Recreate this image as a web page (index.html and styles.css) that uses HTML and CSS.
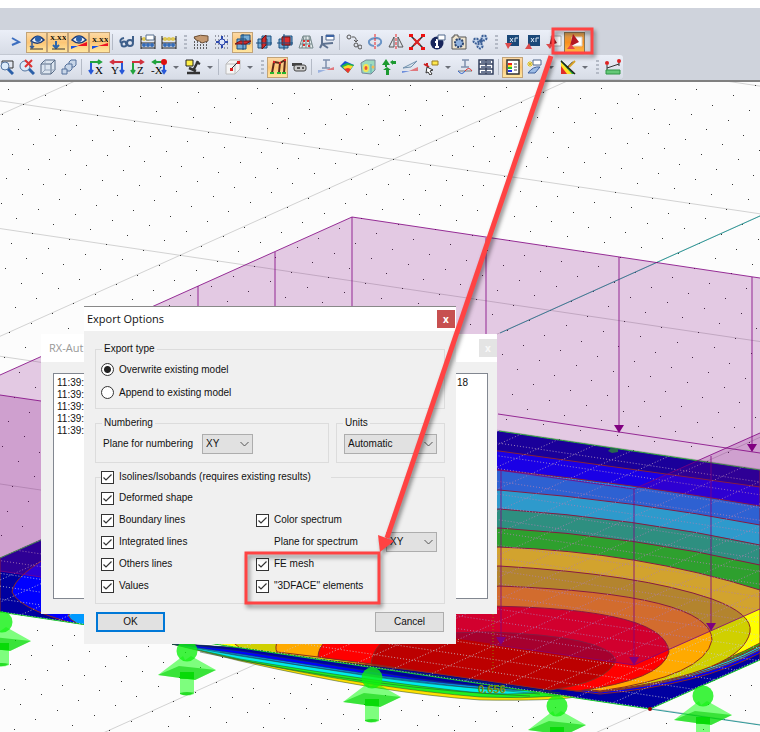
FILE: index.html
```html
<!DOCTYPE html>
<html lang="en">
<head>
<meta charset="utf-8">
<title>Export Options</title>
<link rel="stylesheet" href="styles.css">
</head>
<body>
<div class="band"></div>
<div class="bars">
	<div class="bar">
		<button class="tb" aria-label="Next"><svg viewBox="0 0 16 16"><path d="M4 4L11 8L4 11" fill="none" stroke="#3d6fc0" stroke-width="2"/></svg></button>
		<button class="tb on" aria-label="Show loads"><svg viewBox="0 0 16 16"><path d="M2 7Q8-2 15 6Q9 12 2 7Z" fill="#e8f0fa" stroke="#1d3c78" stroke-width="1.5"/><circle cx="9" cy="5" r="3" fill="#2b61ad"/><path d="M3 7v7M1 12l2 2l2-2" fill="none" stroke="#345b98" stroke-width="1.5"/><path d="M1 15H14" stroke="#333"/></svg></button>
		<button class="tb on" aria-label="Load values"><svg viewBox="0 0 16 16"><text x="0" y="6" class="xx">X.XX</text><path d="M6 7v7M3 11l3 3l3-3" fill="none" stroke="#2e66ad" stroke-width="2"/><path d="M2 15h13" stroke="#333"/></svg></button>
		<button class="tb on" aria-label="Show results"><svg viewBox="0 0 16 16"><path d="M1 6Q8-2 15 6Q8 12 1 6Z" fill="#e8f0fa" stroke="#1d3c78" stroke-width="1.5"/><circle cx="8" cy="5" r="3" fill="#2b61ad"/><path d="M0 15V12L7 12Z" fill="#174ee0"/><path d="M6 12L16 8V12Z" fill="#e12"/></svg></button>
		<button class="tb on" aria-label="Result values"><svg viewBox="0 0 16 16"><text x="0" y="8" class="xx">X.XX</text><path d="M0 15V12H7Z" fill="#174ee0"/><path d="M6 12L16 9V12Z" fill="#e12"/></svg></button>
		<i class="sep"></i>
		<button class="tb" aria-label="View"><svg viewBox="0 0 16 16" fill="none" stroke="#3e5f8a" stroke-width="2"><path d="M5 4Q0 5 2 9"/><circle cx="5" cy="10" r="2.5"/><circle cx="11" cy="9" r="3"/><path d="M14 8V2M8 9L6 9"/></svg></button>
		<button class="tb" aria-label="Calculate"><svg viewBox="0 0 16 16"><path d="M1 2V15M15 2V15M1 5H15M1 9H15M1 14H15" stroke="#222" fill="none"/><g fill="#e1c951"><circle cx="4" cy="5" r="2"/><circle cx="8" cy="5" r="2"/></g><g fill="#356cb8"><circle cx="4" cy="11" r="2"/><circle cx="8" cy="11" r="2"/><circle cx="12" cy="11" r="2"/></g><path d="M6 1H14V6H6Z" fill="#fff" stroke="#58708f"/></svg></button>
		<button class="tb" aria-label="Calculate all"><svg viewBox="0 0 16 16"><path d="M1 2V15M15 2V15M1 5H15M1 9H15M1 14H15" stroke="#222" fill="none"/><g fill="#e1c951"><circle cx="4" cy="5" r="2"/><circle cx="8" cy="5" r="2"/><circle cx="12" cy="5" r="2"/></g><g fill="#356cb8"><circle cx="4" cy="11" r="2"/><circle cx="8" cy="11" r="2"/><circle cx="12" cy="11" r="2"/></g></svg></button>
		<i class="grip"></i>
		<button class="tb" aria-label="Grid"><svg viewBox="0 0 16 16"><path d="M1 8H15M1 11H15M1 14H15M1 4H6" stroke="#333" stroke-width="1.5" stroke-dasharray="1 2"/><path d="M1 3Q7 0 15 2V7L9 9Q7 7 3 6Z" fill="#c49a73" stroke="#6d5138"/></svg></button>
		<button class="tb" aria-label="Snap"><svg viewBox="0 0 16 16"><path d="M1 2H15M1 6H15M1 10H15M1 14H15" stroke="#445" stroke-dasharray="1 2"/><circle cx="8" cy="8" r="3" fill="#dfe7fa" stroke="#2c48ae"/><path d="M8 2V5M8 11V14M2 8H5M11 8H14" stroke="#2c48ae" stroke-width="2"/></svg></button>
		<button class="tb on" aria-label="Work plane XY"><svg viewBox="0 0 16 16"><path d="M6 1H15V10H6ZM2 5H11V15H2Z" fill="#75acd6" stroke="#1b4f7e"/><path d="M0 10L5 7H16L11 10Z" fill="#d22b2b" stroke="#701414"/><path d="M8 0V16" stroke="#1b4f7e"/></svg></button>
		<button class="tb" aria-label="Work plane YZ"><svg viewBox="0 0 16 16"><path d="M6 2H15V11H6ZM2 5H11V14H2Z" fill="#75acd6" stroke="#1b4f7e"/><path d="M6 5L10 1V11L6 15Z" fill="#d22b2b" stroke="#701414"/><path d="M0 9H16" stroke="#1b4f7e"/></svg></button>
		<button class="tb" aria-label="Work plane XZ"><svg viewBox="0 0 16 16"><path d="M6 2H15V11H6ZM2 5H11V14H2Z" fill="#75acd6" stroke="#1b4f7e"/><path d="M5 3H13V11H5Z" fill="#e12f2f" stroke="#701414"/><path d="M0 9H16M7 0V16" stroke="#1b4f7e"/></svg></button>
		<button class="tb" aria-label="Mesh"><svg viewBox="0 0 16 16"><path d="M5 2H12L15 14H1ZM4 6H13M2 10H14M8 2V14M11 2L12 14M6 2L4 14" fill="#e5ecec" stroke="#75878a"/><path d="M5 7h2M9 7h2M5 11h2M10 12h2" stroke="#d33" stroke-width="2"/></svg></button>
		<button class="tb" aria-label="Axes"><svg viewBox="0 0 16 16"><path d="M3 2V10L14 9M3 10L1 14M3 10L9 14" fill="none" stroke="#5e7290" stroke-width="2"/><path d="M7 1H15V6H7Z" fill="#fff" stroke="#50688c"/><path d="M7 2H15" stroke="#3c63a4" stroke-width="2"/></svg></button>
		<i class="sep"></i>
		<button class="tb" aria-label="Move"><svg viewBox="0 0 16 16" fill="none" stroke="#555"><circle cx="3" cy="3" r="2"/><path d="M6 3Q11 2 10 8M8 6L10 8L12 6"/><circle cx="10" cy="11" r="2"/><circle cx="14" cy="13" r="2"/></svg></button>
		<button class="tb" aria-label="Rotate"><svg viewBox="0 0 16 16" fill="none"><path d="M7 12Q1 11 2 7Q4 4 10 4Q15 5 14 9Q13 11 10 12" stroke="#6b95c7" stroke-width="2"/><path d="M8 0V16" stroke="#e22" stroke-dasharray="3 1"/></svg></button>
		<button class="tb" aria-label="Mirror"><svg viewBox="0 0 16 16" fill="none"><path d="M6 3V13H1ZM10 3V13H15Z" stroke="#555"/><path d="M8 0V16" stroke="#e22" stroke-dasharray="3 1"/></svg></button>
		<button class="tb" aria-label="Delete"><svg viewBox="0 0 16 16"><path d="M2 2L14 14M14 2L2 14" stroke="#333" stroke-width="1.5"/><path d="M5 5L11 11M11 5L5 11" stroke="#d22" stroke-width="2"/><g fill="#e11"><path d="M0 0h4v3H0zM12 0h4v3h-4zM0 13h4v3H0zM12 13h4v3h-4z"/></g></svg></button>
		<button class="tb" aria-label="Info"><svg viewBox="0 0 16 16"><circle cx="7" cy="9" r="6.5" fill="#17255b"/><path d="M7 5v2M5 8h2v5M5 13h4" stroke="#fff" stroke-width="2" fill="none"/><path d="M8 1H15V6H8Z" fill="#fff" stroke="#50688c"/></svg></button>
		<button class="tb" aria-label="Snapshot"><svg viewBox="0 0 16 16"><path d="M1 3H3V1H7V3H15V15H1Z" fill="#efe5cf" stroke="#555"/><circle cx="8" cy="9" r="4" fill="#8fb1de" stroke="#2a4470" stroke-width="2" stroke-dasharray="2 1"/></svg></button>
		<button class="tb" aria-label="Settings"><svg viewBox="0 0 16 16" fill="#c7d8ee" stroke="#3a5e96" stroke-width="2"><g stroke-dasharray="2 1"><circle cx="4" cy="7" r="2.5"/><circle cx="12" cy="4" r="2.5"/><circle cx="8" cy="12" r="2.5"/></g><circle cx="9" cy="7" r="1"/></svg></button>
		<i class="grip"></i>
		<button class="tb" aria-label="Import DXF"><svg viewBox="0 0 16 16"><path d="M3 1H15V12H3Z" fill="#1a4878"/><path d="M6 4L9 8M9 4L6 8M11 4v4M11 4h3" stroke="#dbe8f5"/><path d="M1 9H8L4 15Z" fill="#dc4b4b"/></svg></button>
		<button class="tb" aria-label="Export DXF"><svg viewBox="0 0 16 16"><path d="M3 1H15V12H3Z" fill="#1a4878"/><path d="M6 4L9 8M9 4L6 8M11 4v4M11 4h3" stroke="#dbe8f5"/><path d="M0 15H7L4 9Z" fill="#dc4b4b"/></svg></button>
		<button class="tb" aria-label="Import AutoCAD"><svg viewBox="0 0 16 16"><path d="M5 2H15V12H5Z" fill="#fff" stroke="#aaa"/><path d="M3 12L6 1L11 9Z" fill="#a61620"/><path d="M0 10H7L4 15Z" fill="#dc4b4b"/></svg></button>
		<button class="tb pressed" aria-label="Export AutoCAD"><svg viewBox="0 0 16 16"><path d="M5 3H15V12H5Z" fill="#fff" stroke="#d8d0c4"/><path d="M3 12L6 0L12 8L6 11Z" fill="#b31722"/><path d="M0 15H8L4 10Z" fill="#e84646"/></svg></button>
	</div>
	<div class="bar second">
		<button class="tb" aria-label="Zoom window"><svg viewBox="0 0 16 16"><path d="M4 2H15V9H4Z" fill="none" stroke="#333"/><circle cx="7" cy="7" r="4" fill="#dcebfa" stroke="#54749e"/><path d="M10 10L15 15" stroke="#2c60a8" stroke-width="3"/></svg></button>
		<button class="tb" aria-label="Reset zoom"><svg viewBox="0 0 16 16"><circle cx="6" cy="7" r="5" fill="#dcebfa" stroke="#54749e"/><path d="M10 10L15 15" stroke="#2c60a8" stroke-width="3"/><path d="M6 1L13 8M13 1L6 8" stroke="#d33" stroke-width="2"/></svg></button>
		<button class="tb" aria-label="Isometric view"><svg viewBox="0 0 16 16" fill="#dce5ef" stroke="#566a85"><path d="M1 5L5 1H15V11L11 15H1ZM1 5H11V15M11 5L15 1"/><path d="M5 1V11H15M5 11L1 15" fill="none" stroke="#94a4ba"/></svg></button>
		<button class="tb" aria-label="Copies"><svg viewBox="0 0 16 16" fill="#c8d6e8" stroke="#55719b"><path d="M8 3L10 1H15V6L13 8H8Z"/><path d="M4 7L6 5H11V10L9 12H4Z"/><path d="M1 10H6V15H1Z"/></svg></button>
		<i class="sep"></i>
		<button class="tb" aria-label="View X"><svg viewBox="0 0 16 16"><path d="M2 3H13M10 1L13 3L10 5" fill="none" stroke="#22a33d" stroke-width="2"/><path d="M3 4V14M1 11L3 14L5 11" fill="none" stroke="#2758d8" stroke-width="2"/><text x="7" y="15" class="ax">X</text></svg></button>
		<button class="tb" aria-label="View Y"><svg viewBox="0 0 16 16"><path d="M14 3H2M5 1L2 3L5 5" fill="none" stroke="#d2313e" stroke-width="2"/><path d="M13 4V14M11 11L13 14L15 11" fill="none" stroke="#2758d8" stroke-width="2"/><text x="2" y="15" class="ax">Y</text></svg></button>
		<button class="tb" aria-label="View Z"><svg viewBox="0 0 16 16"><path d="M2 3H13M10 1L13 3L10 5" fill="none" stroke="#d2313e" stroke-width="2"/><path d="M3 4V14M1 11L3 14L5 11" fill="none" stroke="#22a33d" stroke-width="2"/><text x="7" y="15" class="ax">Z</text></svg></button>
		<button class="tb" aria-label="View minus X"><svg viewBox="0 0 16 16"><path d="M14 3H2M5 1L2 3L5 5" fill="none" stroke="#22a33d" stroke-width="2"/><path d="M13 4V14M11 11L13 14L15 11" fill="none" stroke="#2758d8" stroke-width="2"/><circle cx="13" cy="3" r="3" fill="#d11"/><text x="0" y="15" class="ax">-X</text></svg></button>
		<button class="caret" aria-label="More views"></button>
		<button class="tb" aria-label="Display"><svg viewBox="0 0 16 16"><path d="M1 1H8V7H1Z" fill="#ffef46" stroke="#222"/><path d="M13 2L8 12M11 3L15 5M4 9L11 12M2 14H15" stroke="#333" stroke-width="2.5"/></svg></button>
		<button class="caret" aria-label="More display"></button>
		<i class="sep"></i>
		<button class="tb" aria-label="Section"><svg viewBox="0 0 16 16"><path d="M1 5L5 1H15V10L10 15H1ZM1 5H10V15M10 5L15 1" fill="#f5f5f5" stroke="#bbb"/><path d="M6 10L13 3" stroke="#333"/><path d="M5 9h3v3H5zM12 2h3v3h-3z" fill="#d22"/></svg></button>
		<button class="caret" aria-label="More sections"></button>
		<i class="grip"></i>
		<button class="tb on" aria-label="Model"><svg viewBox="0 0 16 16" fill="none"><path d="M2 14L4 3L10 4L9 13M10 4L15 1L14 14" stroke="#5b2a19" stroke-width="2"/><path d="M0 14h4M7 14h4M12 14h4" stroke="#27b62f" stroke-width="2"/><path d="M3 3h2M9 4h2M14 1h2" stroke="#d22" stroke-width="2"/></svg></button>
		<button class="tb" aria-label="Flash"><svg viewBox="0 0 16 16"><path d="M1 4H11V7H1Z" fill="#444"/><rect x="3" y="6" width="12" height="6" rx="2" fill="#ccc" stroke="#444"/><path d="M6 9h3M11 9h2" stroke="#555" stroke-width="2"/></svg></button>
		<i class="sep"></i>
		<button class="tb" aria-label="Member results"><svg viewBox="0 0 16 16"><path d="M5 1H12M8 1V9M4 9H12" stroke="#7f90ad" stroke-width="1.5"/><path d="M0 14L8 11H0Z" fill="#9bb2e0"/><path d="M8 11H16V8Z" fill="#e0787e"/></svg></button>
		<button class="tb" aria-label="Surface results"><svg viewBox="0 0 16 16"><path d="M1 7L6 2L15 6L9 14Z" fill="#174fd8"/><path d="M2 7L8 4L15 6L9 14Z" fill="#24b94a"/><path d="M4 8L9 6L14 7L9 14Z" fill="#ffd82c"/><path d="M5 10L9 9L12 10L9 14Z" fill="#e33"/></svg></button>
		<button class="tb" aria-label="Solid results"><svg viewBox="0 0 16 16"><path d="M1 4L6 1H15V11L11 15L2 14Z" fill="#9cdabd" stroke="#789"/><ellipse cx="6" cy="9" rx="3" ry="4" fill="#f5e653"/><ellipse cx="6" cy="9" rx="1.5" ry="2" fill="#e53"/><path d="M11 5V14" stroke="#57a7b7"/><circle cx="13" cy="8" r="1.5" fill="#f5b853"/></svg></button>
		<button class="tb" aria-label="Reactions"><svg viewBox="0 0 16 16" fill="#1c9930"><path d="M5 0L9 6H1ZM4 6H6V8H4ZM9 3L12 1V2H15V5H12V6ZM6 8L10 11H8V16H5V11H2Z"/></svg></button>
		<button class="tb" aria-label="Deflection"><svg viewBox="0 0 16 16"><path d="M1 9L15 2L9 8Z" fill="#dce7ef" stroke="#7190ad"/><path d="M0 14L8 12H0Z" fill="#6d8edb"/><path d="M7 12H16V8Z" fill="#e0787e"/></svg></button>
		<button class="tb" aria-label="Query"><svg viewBox="0 0 16 16"><path d="M9 2H15V6H9Z" fill="#ffe84d" stroke="#977c22"/><path d="M1 5L6 8M4 4V7" stroke="#c22" stroke-width="2"/><path d="M4 8L10 11L7 12L9 15L7 16L5 13L3 14Z" fill="#fff" stroke="#333"/></svg></button>
		<button class="caret" aria-label="More queries"></button>
		<button class="tb" aria-label="Diagram"><svg viewBox="0 0 16 16" fill="none"><path d="M5 1H12M8 1V8M4 8H12" stroke="#7f90ad" stroke-width="1.5"/><path d="M1 12H15" stroke="#777"/><path d="M1 12Q5 17 8 12" stroke="#36c"/><path d="M8 12Q12 7 15 12" stroke="#d33"/></svg></button>
		<button class="tb" aria-label="Tables"><svg viewBox="0 0 16 16"><path d="M1 1H15V15H1ZM1 5H15M1 10H15M8 1V15" fill="#fff" stroke="#33405f" stroke-width="1.5"/><path d="M3 3h4M9 3h4M3 8h4M9 8h4M3 13h4M9 13h4" stroke="#6b7894" stroke-width="2"/></svg></button>
		<i class="sep"></i>
		<button class="tb on" aria-label="Panel"><svg viewBox="0 0 16 16"><path d="M2 1H14V15H2Z" fill="#fff" stroke="#333" stroke-width="1.5"/><path d="M3 5h4" stroke="#e22" stroke-width="2"/><path d="M3 7h4" stroke="#fd2" stroke-width="2"/><path d="M3 9h4" stroke="#2b3" stroke-width="2"/><path d="M3 12h4" stroke="#23d" stroke-width="2"/><path d="M9 5h3M9 8h3M9 11h3" stroke="#444"/></svg></button>
		<button class="tb" aria-label="New window"><svg viewBox="0 0 16 16"><path d="M7 1H15V6H7Z" fill="#fff" stroke="#50688c"/><path d="M1 5h6M4 2v6M2 3l4 4M6 3L2 7" stroke="#dbbd1c"/><path d="M2 14Q7 7 14 8L9 14Z" fill="#9dbce6" stroke="#3c5f9c"/></svg></button>
		<button class="caret" aria-label="More windows"></button>
		<button class="tb" aria-label="Colour scale"><svg viewBox="0 0 16 16"><path d="M1 1L15 15H1Z" fill="#20a83c"/><path d="M1 3L12 15H6L1 9Z" fill="#ffdf2b"/><path d="M1 7L7 15H1Z" fill="#e02b2b"/><path d="M1 2L15 15M7 9L13 3" stroke="#222" stroke-width="1.5"/><path d="M9 8L15 2" stroke="#d8a32b" stroke-width="2"/></svg></button>
		<button class="caret" aria-label="More scales"></button>
		<i class="grip"></i>
		<button class="tb" aria-label="Measure"><svg viewBox="0 0 16 16"><path d="M2 9L14 5M2 6v5M14 2v5" stroke="#333"/><circle cx="2" cy="4" r="2" fill="#d22"/><circle cx="14" cy="2" r="2" fill="#d22"/><path d="M1 11H15V15H1Z" fill="#64c878" stroke="#2f9444"/></svg></button>
	</div>
</div>

<div class="viewport">
<svg class="model" viewBox="0 82 760 650" preserveAspectRatio="xMinYMin slice">
	<defs>
		<clipPath id="slab"><path d="M499 431L760 470V660L650 709L0 612V558L120 504Z"/></clipPath>
		<g id="support">
			<path d="M-29 24L-4 5L8 29Z M4 5L29 19L8 29L-6 12Z" fill="#00ff00" fill-opacity=".5"/>
			<path d="M-29 24L-8 15L29 19L8 29Z" fill="#00cc00" fill-opacity=".55"/>
			<path d="M-7 21H7V43Q0 46-7 43Z" fill="#00ff00" fill-opacity=".5"/>
			<path d="M-7 21H7V28H-7ZM-7 42Q0 40 7 42Q0 46-7 43Z" fill="#00d000" fill-opacity=".7"/>
			<circle r="10.5" fill="#10f010" fill-opacity=".8"/>
		</g>
		<path id="head" d="M-5-8H5L0 0Z"/>
	</defs>
	<path id="grid" class="grid"/>
	<path id="dots" class="dots"/>
	<path d="M500 333L760 216M650 709L760 725" class="axis"/>

	<!-- isobands on the plate, outermost first -->
	<g clip-path="url(#slab)" class="iso">
		<path d="M0 400H760V732H0Z" fill="#0000a0"/>
		<path d="M499 451L760 487V653Q700 685 600 694L370 665L100 630Q20 612 12 592Q14 575 60 550L300 440Z" fill="#0000ff"/>
		<path d="M499 470Q634 484 760 506V650Q700 682 600 692L400 664L100 630Q70 624 68 615L300 480Z" fill="#0099ff"/>
		<path d="M499 490Q634 501 760 525V648Q700 680 600 692L120 628L300 500Z" fill="#00f2f7"/>
		<path d="M499 509Q634 518 760 545V646Q700 678 600 691L140 628L300 520Z" fill="#00e080"/>
		<path d="M499 528Q634 536 760 565V645Q700 677 600 691L160 628L300 540Z" fill="#00fa00"/>
		<path d="M499 547Q640 552 760 590V643Q700 676 600 691L200 645L300 560Z" fill="#ffff00"/>
		<path d="M499 566Q640 574 712 599Q753 614 750 632Q742 672 610 690L245 652L230 640L300 580Z" fill="#d0d000"/>
		<path d="M499 586Q712 594 712 640Q705 676 600 691L277 652Q272 644 290 620Z" fill="#ffaa00"/>
		<path d="M450 606Q665 604 669 652Q662 680 577 691L318 657Q318 640 350 625Z" fill="#ff0000"/>
		<path d="M490 632Q606 636 616 660Q608 682 550 690L371 664Q374 640 400 634Z" fill="#bc0000"/>
	</g>

	<!-- underside of the deflected plate -->
	<g class="rim">
		<path d="M172 644L240 648L540 692L575 697Q555 701 480 700Q380 693 240 661Z" fill="#ffe000"/>
		<path d="M172 644L240 648L540 692L560 696Q520 699 480 697Q380 689 240 660Z" fill="#20f020"/>
		<path d="M172 644L240 648L540 692Q510 696 470 692Q370 681 240 659Z" fill="#00ecec"/>
		<path d="M172 644L240 648L540 691Q480 691 375 677L240 656Z" fill="#0099ff"/>
		<path d="M172 644L240 648L540 691Q450 685 375 675L240 654Z" fill="#0000ff"/>
		<path d="M172 643L240 648L560 693Q450 685 375 672L240 651Z" fill="#0000a0"/>
		<path d="M200 652Q380 690 530 696M220 652Q390 682 540 694" fill="none"/>
	</g>
	<path d="M760 660L650 709L0 612M499 431L760 470M0 558L41 540" class="edge"/>
	<path d="M611 448l7 1v3l-6 1-4-2z" fill="#108040"/>

	<g clip-path="url(#slab)"><path id="mesh" class="mesh"/></g>

	<!-- line load volume -->
	<path d="M0 375L352 217L760 278V609L634 665L0 571Z" class="load"/>
	<path d="M0 395L634 489L760 433V609L634 665L0 571Z" class="load"/>
	<path d="M0 375L352 217L760 278M498 414L760 453M498 470L634 489L760 433M490 644L634 665L760 609M0 395L41 401M0 571L41 577M198 286V340M275 252V340M352 217V390M486 238V410M619 257V430M752 277V448M501 470V641M634 489V662M711 456V627" class="loadline"/>
	<g fill="#800080">
		<use href="#head" x="619" y="433"/><use href="#head" x="752" y="452"/><use href="#head" x="501" y="645"/><use href="#head" x="634" y="665"/><use href="#head" x="711" y="631"/>
	</g>
	<path d="M493 614V674" class="value-line"/>
	<text x="478" y="693" class="value">0.656</text>
	<use href="#support" x="2" y="622"/><use href="#support" x="187" y="651"/><use href="#support" x="372" y="678"/><use href="#support" x="557" y="706"/><use href="#support" x="703" y="696"/>
	<circle cx="650" cy="709" r="2" fill="#900"/>
</svg>
</div>

<section class="win log">
	<header><h2>RX-Aut</h2><button class="close" aria-label="Close log">x</button></header>
	<div class="log-body">
		<div class="lines">
			<p><span>11:39:</span><span>18</span></p>
			<p>11:39:</p>
			<p>11:39:</p>
			<p>11:39:</p>
			<p>11:39:</p>
		</div>
	</div>
</section>

<section class="win export">
	<header><h1>Export Options</h1><button class="close" aria-label="Close">x</button></header>
	<form class="form">
		<fieldset class="type">
			<legend>Export type</legend>
			<label><input type="radio" name="type" checked>Overwrite existing model</label>
			<label><input type="radio" name="type">Append to existing model</label>
		</fieldset>
		<div class="pair">
			<fieldset class="numbering">
				<legend>Numbering</legend>
				<label for="plane">Plane for numbering</label>
				<select id="plane"><option>XY</option></select>
			</fieldset>
			<fieldset class="units">
				<legend>Units</legend>
				<select aria-label="Units"><option>Automatic</option></select>
			</fieldset>
		</div>
		<fieldset class="options">
			<legend><label><input type="checkbox" checked>Isolines/Isobands (requires existing results)</label></legend>
			<div class="cols">
				<div class="col">
					<label><input type="checkbox" checked>Deformed shape</label>
					<label><input type="checkbox" checked>Boundary lines</label>
					<label><input type="checkbox" checked>Integrated lines</label>
					<label><input type="checkbox" checked>Others lines</label>
					<label><input type="checkbox" checked>Values</label>
				</div>
				<div class="col right">
					<label><input type="checkbox" checked>Color spectrum</label>
					<div class="spectrum"><label for="spec">Plane for spectrum</label><select id="spec"><option>XY</option></select></div>
					<label><input type="checkbox" checked>FE mesh</label>
					<label><input type="checkbox" checked>"3DFACE" elements</label>
				</div>
			</div>
		</fieldset>
		<div class="actions">
			<button type="button" class="btn default">OK</button>
			<button type="button" class="btn">Cancel</button>
		</div>
	</form>
</section>

<svg class="notes">
	<rect x="553" y="29" width="39" height="24"/>
	<rect x="246" y="553" width="133" height="50"/>
	<path d="M551 56L387 538" class="shaft"/>
	<path d="M380 552L378 535L394 541Z" class="tip"/>
</svg>
<script src="model.js"></script>
</body>
</html>
```
FILE: styles.css
```css
* {box-sizing:border-box; margin:0; padding:0;}
body {min-height:100vh; display:flex; flex-direction:column; position:relative; overflow:hidden; background:#fff; font:10px/14px "Liberation Sans", sans-serif; color:#111;}
button, select, input {font:inherit; color:inherit;}

.band {height:22px; margin-top:8px; background:#cfd3dc;}
.bars {background:#cfd3dc; border-bottom:2px solid #808080;}
.bar {display:flex; align-items:center; width:max-content; height:25px; padding-left:5px; border-bottom:1px solid #c3c8d2; border-radius:0 3px 3px 0; background:linear-gradient(#ebeff8, #d7dce6);}
.second {margin-left:-5px; padding:0;}
.tb {display:flex; align-items:center; justify-content:center; width:21px; height:21px; border:1px solid transparent; background:none;}
.tb svg {width:16px; height:16px; flex:none;}
.on {border-color:#c2a377; background:linear-gradient(#fcd9a5, #fdc676 50%, #ffe6a0);}
.pressed {border-color:#8b7654; background:linear-gradient(#d59b55, #f98f1d 50%, #ffb94a);}
.sep {width:1px; height:16px; margin:0 3px 0 2px; background:#b4bac6;}
.grip {width:3px; height:15px; margin:0 3px 0 5px; background:repeating-linear-gradient(#b4bac6 0 2px, transparent 2px 4px);}
.caret {width:13px; height:20px; border:0; background:none;}
.caret::after {content:""; display:block; width:0; margin:0 auto; border:3px solid transparent; border-top-color:#6b6f78; border-bottom:0;}
.xx {font:bold 7px "Liberation Serif", serif;}
.ax {font:11px "Liberation Serif", serif;}

.viewport {flex:1; min-height:0; position:relative; background:#fcfcfc;}
.model {position:absolute; width:100%; height:100%;}
.grid {fill:none; stroke:#d2d2d2;}
.dots {fill:none; stroke:#333; stroke-width:1; shape-rendering:crispEdges;}
.axis {fill:none; stroke:#2f9a9a;}
.iso path {stroke:#8a2a20; stroke-width:1;}
.rim path {stroke:#204830; stroke-width:0.5px;}
.edge {fill:none; stroke:#10d020; stroke-width:1;}
.mesh {fill:none; stroke:#c8c8d0; stroke-opacity:.8; stroke-dasharray:1 2;}
.load {fill:#800080; fill-opacity:.2;}
.loadline {fill:none; stroke:#800080; stroke-opacity:.8;}
.value-line {stroke:#908000; stroke-dasharray:1 2;}
.value {font:bold 11px "Liberation Sans", sans-serif; fill:#7f9000;}

.win {position:absolute; display:flex; flex-direction:column; background:#f0f0f0;}
.win header {display:flex; align-items:center; justify-content:space-between; background:#fff;}
.win h1, .win h2 {font:11px/16px "Open Sans", sans-serif;}
.close {width:18px; height:18px; border:0; background:#c75050; color:#fff; font:bold 10px/14px "Noto Sans", sans-serif;}
.log {left:41px; top:334px; width:456px; height:280px;}
.log header {height:28px; padding-left:8px;}
.log h2 {color:#999;}
.log .close {background:#e4e4e4; color:#f8f8f8;}
.log-body {flex:1; padding:11px 9px 15px 12px;}
.lines {height:100%; padding:3px 19px 0 3px; border:1px solid #828790; background:#fff; line-height:12px;}
.lines p {display:flex; justify-content:space-between;}

.export {left:84px; top:306px; width:372px; border-top:1px solid #888;}
.export header {height:24px; padding:0 1px 0 3px;}
.form {display:flex; flex-direction:column; padding:11px 11px 12px;}
fieldset {min-width:0; border:1px solid #dcdcdc; padding:0 5px;}
legend {height:14px; margin-left:1px; padding:0 2px;}
label {display:flex; align-items:center; white-space:nowrap;}
.type {padding-top:2px; padding-bottom:4px;}
.type label {height:23px;}
.pair {display:flex; gap:7px; margin-top:7px;}
.pair fieldset {display:flex; align-items:center; padding:4px 7px 8px;}
.numbering {flex:1;}
.numbering label {flex:none; width:99px;}
.units {width:109px;}
.pair legend {margin-left:-1px;}
.units select {width:93px;}
.options {margin-top:7px; padding-bottom:6px;}
.options legend {margin:0; padding:0 20px 0 0;}
.cols {display:flex; padding-top:3px;}
.col {width:155px;}
.col label, .spectrum {height:22px;}
.right {flex:1; padding-top:22px;}
.spectrum {display:flex; align-items:center; justify-content:space-between; padding:0 2px 0 18px;}

input {appearance:none; flex:none; width:13px; height:13px; margin-right:5px; border:1px solid #333; background:#fff;}
input[type=radio] {border-radius:50%;}
input[type=radio]:checked {background:radial-gradient(circle, #222 0 3px, #fff 4px);}
input[type=checkbox]:checked {background:#fff url("data:image/svg+xml,%3Csvg xmlns='http://www.w3.org/2000/svg' viewBox='0 0 11 11'%3E%3Cpath d='M1.5 5.5L4 8L9.500 2.500' fill='none' stroke='%23333' stroke-width='1.2'/%3E%3C/svg%3E");}
select {appearance:none; width:51px; height:20px; padding-left:3px; border:1px solid #adadad; border-radius:0; background:#e1e1e1 url("data:image/svg+xml,%3Csvg xmlns='http://www.w3.org/2000/svg' width='9' height='6'%3E%3Cpath d='M.5 1L4.500 5L8.500 1' fill='none' stroke='%23555'/%3E%3C/svg%3E") no-repeat right 3px center;}
.actions {display:flex; justify-content:space-between; padding:0 1px; margin-top:8px;}
.btn {width:69px; height:20px; border:1px solid #adadad; background:#e1e1e1;}
.default {border:2px solid #0078d7;}

.notes {position:absolute; inset:0; width:100%; height:100%; pointer-events:none; filter:drop-shadow(2px 3px 2px rgba(0,0,0,.45));}
.notes rect {fill:none; stroke:#ff4343; stroke-width:3;}
.shaft {stroke:#ff4343; stroke-width:5;}
.tip {fill:#ff4343;}
```
FILE: model.js
```js
// raster of the work plane: u and v are one step in each direction
var ox=393.3, oy=159.3;
var u=[37, 5.5], v=[-21.33, 9.6];

function pt(a, b)
{
	return [ox+a*u[0]+b*v[0], oy+a*u[1]+b*v[1]];
}

function line(a1, b1, a2, b2)
{
	return 'M'+pt(a1, b1).join(' ')+'L'+pt(a2, b2).join(' ');
}

var dots='', grid='', mesh='';

for(var a=-20;a<=50;a++)
{
	for(var b=-30;b<=70;b++)
	{
		var p=pt(a, b);
		if(p[0]<0 || p[0]>760 || p[1]<84 || p[1]>732) continue;
		dots+='M'+Math.round(p[0])+' '+(Math.round(p[1])+0.5)+'h1';
	}
	mesh+=line(a, -30, a, 70);
}

for(var i=-30;i<=70;i++)
{
	mesh+=line(-20, i, 50, i);
}

for(var j=-30;j<=70;j+=10)
{
	grid+=line(-30, j, 60, j)+line(j, -40, j, 80);
}

document.getElementById('dots').setAttribute('d', dots);
document.getElementById('grid').setAttribute('d', grid);
document.getElementById('mesh').setAttribute('d', mesh);
```
